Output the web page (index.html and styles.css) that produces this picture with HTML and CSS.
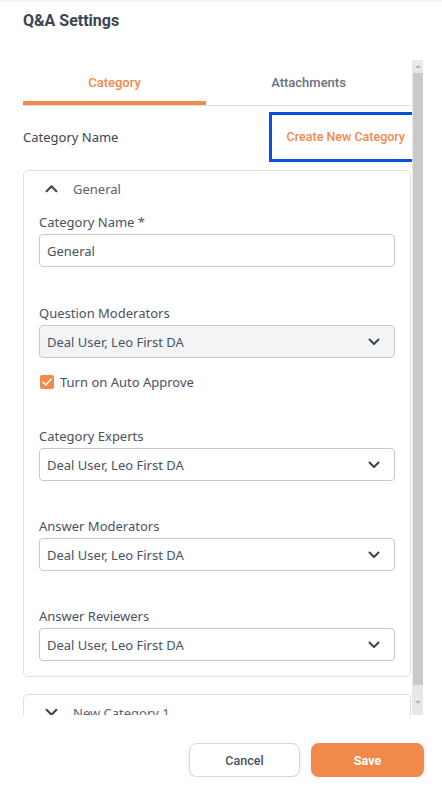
FILE: index.html
```html
<!DOCTYPE html>
<html lang="en">
<head>
  <meta charset="UTF-8">
  <title>Q&amp;A Settings</title>
  <link rel="stylesheet" href="styles.css">
</head>
<body>

  <div class="panel">
    <h2 class="panel-title">Q&amp;A Settings</h2>

    <div class="scroll-wrap">
      <div class="scroll-content">
        <!-- Tabs -->
        <div class="tabs">
          <div class="tab active">Category</div>
          <div class="tab">Attachments</div>
        </div>

        <div class="section-head">
          <span class="section-label">Category Name</span>
          <button class="link-btn">Create New Category</button>
        </div>

        <!-- Expanded category -->
        <div class="category-card">
          <div class="card-head">
            <svg class="chev" viewBox="0 0 12 8"><path d="M1.5 6.5 L6 2 L10.5 6.5" /></svg>
            <span>General</span>
          </div>

          <div class="field first">
            <label>Category Name *</label>
            <div class="input">General</div>
          </div>

          <div class="field">
            <label>Question Moderators</label>
            <div class="select disabled">
              <span>Deal User, Leo First DA</span>
              <svg class="chev small" viewBox="0 0 12 8"><path d="M1.5 1.5 L6 6 L10.5 1.5" /></svg>
            </div>
            <div class="check-row">
              <span class="checkbox">
                <svg viewBox="0 0 14 14"><path d="M3 7.2 L5.8 10 L11 4.2" /></svg>
              </span>
              <span>Turn on Auto Approve</span>
            </div>
          </div>

          <div class="field">
            <label>Category Experts</label>
            <div class="select">
              <span>Deal User, Leo First DA</span>
              <svg class="chev small" viewBox="0 0 12 8"><path d="M1.5 1.5 L6 6 L10.5 1.5" /></svg>
            </div>
          </div>

          <div class="field">
            <label>Answer Moderators</label>
            <div class="select">
              <span>Deal User, Leo First DA</span>
              <svg class="chev small" viewBox="0 0 12 8"><path d="M1.5 1.5 L6 6 L10.5 1.5" /></svg>
            </div>
          </div>

          <div class="field last">
            <label>Answer Reviewers</label>
            <div class="select">
              <span>Deal User, Leo First DA</span>
              <svg class="chev small" viewBox="0 0 12 8"><path d="M1.5 1.5 L6 6 L10.5 1.5" /></svg>
            </div>
          </div>
        </div>

        <!-- Collapsed category -->
        <div class="category-card collapsed">
          <div class="card-head">
            <svg class="chev" viewBox="0 0 12 8"><path d="M1.5 1.5 L6 6 L10.5 1.5" /></svg>
            <span>New Category 1</span>
          </div>
        </div>
      </div>

      <div class="scrollbar">
        <div class="arrow up"></div>
        <div class="thumb"></div>
        <div class="arrow down"></div>
      </div>
    </div>

    <div class="actions">
      <button class="btn cancel">Cancel</button>
      <button class="btn save">Save</button>
    </div>
  </div>

</body>
</html>
```

FILE: styles.css
```css
body {
  margin: 0;
  font-family: "Noto Sans", "Open Sans", sans-serif;
  color: #4a5260;
  background: #fff;
}

.panel {
  border-top: 2px solid #f3f3f3;
  padding: 0 19px 0 23px;
}

.panel-title {
  margin: 0;
  height: 58px;
  padding-top: 9px;
  box-sizing: border-box;
  font-family: Roboto, sans-serif;
  font-size: 16px;
  font-weight: 700;
  color: #3b4552;
}

.scroll-wrap {
  display: flex;
  height: 655px;
}

.scroll-content {
  flex: 1;
  overflow: hidden;
  padding-right: 1px;
}

/* tabs */
.tabs {
  display: grid;
  grid-template-columns: 183px 1fr;
  border-bottom: 1px solid #dedede;
}

.tab {
  height: 45px;
  padding-top: 15px;
  box-sizing: border-box;
  text-align: center;
  font-family: Roboto, sans-serif;
  font-size: 13px;
  font-weight: 500;
  color: #6b7280;
  border-bottom: 4px solid transparent;
}

.tab.active {
  color: #f0894a;
  border-bottom-color: #f0894a;
}

.section-head {
  display: flex;
  justify-content: space-between;
  align-items: center;
  height: 55px;
  padding-top: 6px;
  box-sizing: border-box;
}

.section-label {
  font-size: 13px;
  color: #3d4654;
}

.link-btn {
  background: #fff;
  border: 0;
  outline: 3px solid #0b4fe0;
  outline-offset: 0;
  height: 44px;
  padding: 0 8px 0 15px;
  font-family: Roboto, sans-serif;
  font-size: 12.5px;
  font-weight: 500;
  color: #f0894a;
  position: relative;
  left: 2px;
}

/* category cards */
.category-card {
  border: 1px solid #dcdfe3;
  border-radius: 5px;
  padding: 0 15px 15px;
  margin-top: 9px;
}

.category-card.collapsed {
  margin-top: 17px;
}

.card-head {
  display: flex;
  align-items: center;
  height: 35px;
  padding-left: 6px;
  font-size: 13px;
  color: #5a6270;
}

.chev {
  width: 13px;
  height: 9px;
  margin-right: 15px;
}

.chev path {
  fill: none;
  stroke: #3d4654;
  stroke-width: 2;
  stroke-linecap: round;
  stroke-linejoin: round;
}

.chev.small {
  width: 12px;
  height: 8px;
  margin: 0 2px 0 0;
}

.field {
  padding-top: 7px;
  margin-bottom: 29px;
}

.field.first {
  margin-bottom: 30px;
}

.field.last {
  margin-bottom: 0;
}

.field label {
  display: block;
  font-size: 13px;
  color: #4a5260;
  margin-bottom: 3px;
}

.input,
.select {
  height: 33px;
  box-sizing: border-box;
  border: 1px solid #c7c9cc;
  border-radius: 4px;
  padding: 0 12px 0 7px;
  display: flex;
  align-items: center;
  font-size: 13px;
  color: #4a5260;
}

.select {
  justify-content: space-between;
}

.select.disabled {
  background: #f3f4f6;
}

.check-row {
  display: flex;
  align-items: center;
  gap: 6px;
  margin-top: 15px;
  margin-bottom: 4px;
  font-size: 13px;
}

.checkbox {
  width: 14px;
  height: 14px;
  border-radius: 2px;
  background: #f0894a;
  margin-left: 1px;
  display: flex;
}

.checkbox svg {
  width: 14px;
  height: 14px;
}

.checkbox path {
  fill: none;
  stroke: #fff;
  stroke-width: 1.6;
  stroke-linecap: round;
  stroke-linejoin: round;
}

/* scrollbar */
.scrollbar {
  width: 11px;
  background: #e8e8e8;
  display: flex;
  flex-direction: column;
  align-items: center;
}

.arrow {
  width: 0;
  height: 0;
  border-left: 3px solid transparent;
  border-right: 3px solid transparent;
  margin: 5px 0;
}

.arrow.up {
  border-bottom: 3px solid #b4b4b4;
}

.arrow.down {
  border-top: 3px solid #b4b4b4;
  margin-top: 16px;
}

.thumb {
  width: 10px;
  height: 612px;
  background: #c9c9c9;
}

/* footer buttons */
.actions {
  display: flex;
  justify-content: flex-end;
  gap: 11px;
  margin-top: 28px;
  margin-right: -1px;
}

.btn {
  height: 34px;
  border-radius: 8px;
  font-family: Roboto, sans-serif;
  font-size: 12.5px;
  font-weight: 500;
}

.btn.cancel {
  width: 111px;
  background: #fff;
  border: 1px solid #d5d8dc;
  color: #4a5260;
  box-shadow: 0 2px 4px rgba(0, 0, 0, 0.08);
}

.btn.save {
  width: 113px;
  background: #f0894a;
  border: 0;
  color: #fff;
  font-weight: 700;
  box-shadow: 0 2px 4px rgba(0, 0, 0, 0.1);
}
```
